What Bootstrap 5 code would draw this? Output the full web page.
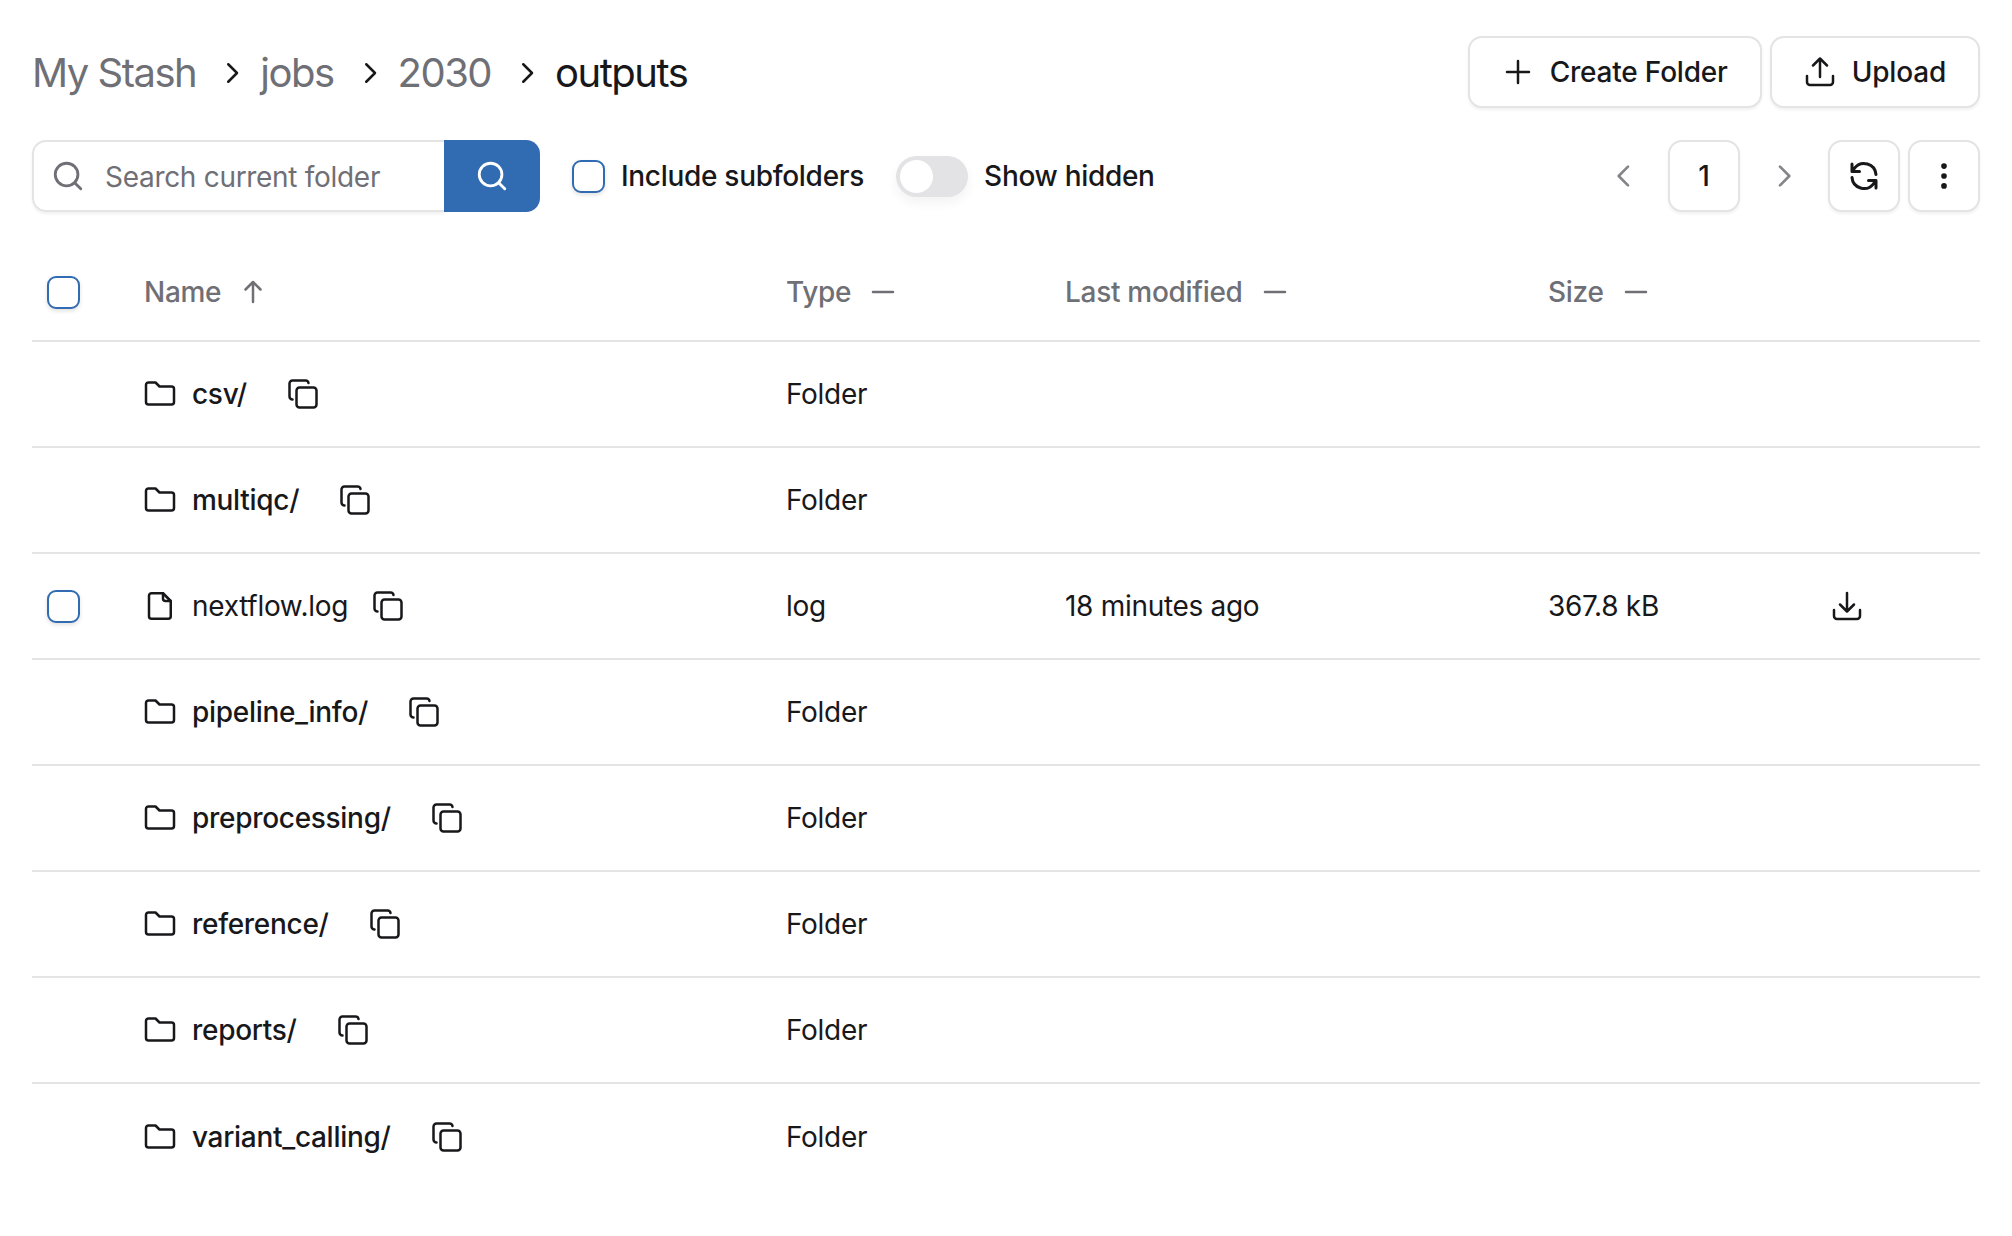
<!DOCTYPE html>
<html lang="en">
<head>
    <meta charset="UTF-8">
    <meta name="viewport" content="width=device-width, initial-scale=1.0">
    <title>My Stash</title>
    <link href="https://cdn.jsdelivr.net/npm/bootstrap@5.3.0/dist/css/bootstrap.min.css" rel="stylesheet">
    <style>
        body { font-family: Inter, "Liberation Sans", sans-serif; font-size: 28px; letter-spacing: -0.3px; color: #18181b; background: #fff; }
        .stash-page { padding: 36px 32px 0; }
        .crumb-row { height: 72px; margin-bottom: 32px; }
        .crumb-trail { padding-top: 2px; }
        .crumb { font-size: 40px; color: #6f6f76; letter-spacing: -1.5px; }
        .crumb-now { color: #18181b; }
        .crumb-sep { width: 64px; padding-left: 8px; color: #18181b; }
        .ui-icon { fill: none; stroke: currentColor; stroke-width: 2.5; stroke-linecap: round; stroke-linejoin: round; flex: none; }
        .thin-icon { stroke-width: 2; }
        .plain-btn { height: 72px; border: 2px solid #e4e4e4; border-radius: 14px; background: #fff; color: #18181b; font-size: 28px; font-weight: 500; letter-spacing: -0.2px; box-shadow: 0 2px 3px rgba(0,0,0,.06); padding: 0 32px; }
        .plain-btn:hover { background: #fff; border-color: #e4e4e4; }
        .square-btn { width: 72px; padding: 0; }
        .search-box { width: 508px; height: 72px; }
        .search-field { flex: 1; border: 2px solid #e4e4e4; border-right: 0; border-radius: 14px 0 0 14px; padding-left: 17px; gap: 20px; color: #6f6f76; box-shadow: 0 2px 3px rgba(0,0,0,.06); }
        .search-field input { border: 0; outline: 0; width: 300px; font-size: 28px; letter-spacing: -0.3px; color: #18181b; padding: 1px 0 0; background: transparent; }
        .search-field input::placeholder { color: #6f6f76; opacity: 1; }
        .search-go { width: 96px; background: #316bb2; color: #fff; border: 0; border-radius: 0 14px 14px 0; padding: 0; }
        .tick-box.form-check-input { width: 33px; height: 33px; margin: 0; border: 2.5px solid #316bb2; border-radius: 9px; box-shadow: 0 2px 4px rgba(0,0,0,.12); flex: none; }
        .include-wrap { margin-left: 32px; gap: 16px; font-weight: 500; }
        .hidden-wrap { margin-left: 32px; gap: 16px; font-weight: 500; }
        .switch-track { width: 72px; height: 41px; border-radius: 21px; background: #e3e3e6; box-shadow: 0 6px 12px rgba(0,0,0,.05); }
        .switch-knob { width: 33px; height: 33px; margin-left: 4px; border-radius: 50%; background: #fff; }
        .pager-arrow { color: #85858a; width: 88px; }
        .pager-num { font-weight: 500; }
        .stash-table { margin: 32px 0 0; table-layout: fixed; width: 100%; --bs-table-color: #18181b; }
        .stash-table th, .stash-table td { padding: 0; vertical-align: middle; border-bottom: 2px solid #e4e4e4; }
        .stash-table th { height: 97px; color: #6f6f76; font-weight: 500; }
        .stash-table td { height: 106px; }
        .stash-table tr:last-child td { border-bottom: 0; }
        .col-tick { width: 112px; }
        .col-name { width: 642px; }
        .col-type { width: 279px; }
        .col-date { width: 483px; }
        .tick-cell { padding-left: 15px !important; }
        .sort-mark { margin-left: 17px; }
        .dash-mark { color: #6f6f76; margin-left: 17px; }
        .name-cell { gap: 16px; font-weight: 500; }
        .file-name { font-weight: 400; }
        .copy-mark { margin-left: 24px; }
        .copy-near { margin-left: 8px; }
        .size-text { width: 283px; }
    </style>
</head>
<body>
    <div class="stash-page">
        <div class="d-flex align-items-center justify-content-between crumb-row">
            <div class="d-flex align-items-center crumb-trail">
                <span class="crumb">My Stash</span>
                <span class="crumb-sep d-flex justify-content-center"><svg class="ui-icon thin-icon" width="30" height="30" viewBox="0 0 24 24"><path d="M9 5l7 7-7 7"/></svg></span>
                <span class="crumb">jobs</span>
                <span class="crumb-sep d-flex justify-content-center"><svg class="ui-icon thin-icon" width="30" height="30" viewBox="0 0 24 24"><path d="M9 5l7 7-7 7"/></svg></span>
                <span class="crumb">2030</span>
                <span class="crumb-sep d-flex justify-content-center"><svg class="ui-icon thin-icon" width="30" height="30" viewBox="0 0 24 24"><path d="M9 5l7 7-7 7"/></svg></span>
                <span class="crumb crumb-now">outputs</span>
            </div>
            <div class="d-flex gap-2">
                <button class="btn plain-btn d-flex align-items-center gap-3">
                    <svg class="ui-icon" width="32" height="32" viewBox="0 0 32 32"><path d="M16 5v22M5 16h22"/></svg>Create Folder
                </button>
                <button class="btn plain-btn d-flex align-items-center gap-3">
                    <svg class="ui-icon" width="32" height="32" viewBox="0 0 32 32"><path d="M3 20v6a3 3 0 0 0 3 3h20a3 3 0 0 0 3-3v-6M16 21V3M9 9.500l7-7 7 7"/></svg>Upload
                </button>
            </div>
        </div>

        <div class="d-flex align-items-center">
            <div class="d-flex search-box">
                <label class="d-flex align-items-center search-field">
                    <svg class="ui-icon thin-icon" width="34" height="34" viewBox="0 0 24 24"><circle cx="11" cy="11" r="8"/><path d="M21 21l-4.3-4.3"/></svg>
                    <input type="text" placeholder="Search current folder">
                </label>
                <button class="search-go d-flex align-items-center justify-content-center">
                    <svg class="ui-icon thin-icon" width="34" height="34" viewBox="0 0 24 24"><circle cx="11" cy="11" r="8"/><path d="M21 21l-4.3-4.3"/></svg>
                </button>
            </div>
            <label class="d-flex align-items-center include-wrap">
                <input class="form-check-input tick-box" type="checkbox">Include subfolders
            </label>
            <div class="d-flex align-items-center hidden-wrap">
                <div class="switch-track d-flex align-items-center"><div class="switch-knob"></div></div>Show hidden
            </div>
            <div class="d-flex align-items-center ms-auto">
                <span class="pager-arrow d-flex justify-content-center"><svg class="ui-icon thin-icon" width="32" height="32" viewBox="0 0 24 24"><path d="M15 5l-7 7 7 7"/></svg></span>
                <button class="btn plain-btn square-btn pager-num">1</button>
                <span class="pager-arrow d-flex justify-content-center"><svg class="ui-icon thin-icon" width="32" height="32" viewBox="0 0 24 24"><path d="M9 5l7 7-7 7"/></svg></span>
                <button class="btn plain-btn square-btn d-flex align-items-center justify-content-center">
                    <svg class="ui-icon thin-icon" width="36" height="36" viewBox="0 0 24 24"><path d="M20 11a8 8 0 0 0-14.300-4.200L4 9V4M4 13a8 8 0 0 0 14.300 4.200L20 15v5M4 9h5M20 15h-5"/></svg>
                </button>
                <button class="btn plain-btn square-btn d-flex align-items-center justify-content-center ms-2">
                    <svg width="34" height="34" viewBox="0 0 24 24" fill="currentColor"><circle cx="12" cy="5" r="2"/><circle cx="12" cy="12" r="2"/><circle cx="12" cy="19" r="2"/></svg>
                </button>
            </div>
        </div>

        <table class="table stash-table">
            <thead>
                <tr>
                    <th class="col-tick tick-cell"><input class="form-check-input tick-box d-block" type="checkbox"></th>
                    <th class="col-name"><div class="d-flex align-items-center">Name<svg class="ui-icon thin-icon sort-mark" width="30" height="30" viewBox="0 0 24 24"><path d="M12 20V4M6 10l6-6 6 6"/></svg></div></th>
                    <th class="col-type"><div class="d-flex align-items-center">Type<svg class="ui-icon thin-icon dash-mark" width="30" height="30" viewBox="0 0 24 24"><path d="M4 12h16"/></svg></div></th>
                    <th class="col-date"><div class="d-flex align-items-center">Last modified<svg class="ui-icon thin-icon dash-mark" width="30" height="30" viewBox="0 0 24 24"><path d="M4 12h16"/></svg></div></th>
                    <th><div class="d-flex align-items-center">Size<svg class="ui-icon thin-icon dash-mark" width="30" height="30" viewBox="0 0 24 24"><path d="M4 12h16"/></svg></div></th>
                </tr>
            </thead>
            <tbody id="file-rows"></tbody>
        </table>
    </div>

    <script src="https://cdn.jsdelivr.net/npm/bootstrap@5.3.0/dist/js/bootstrap.bundle.min.js"></script>
    <script>
        const folderIcon = '<svg class="ui-icon" width="32" height="32" viewBox="0 0 32 32"><path d="M4.500 4.500h7l4 4h12a2.500 2.500 0 0 1 2.500 2.500v13a2.500 2.500 0 0 1-2.500 2.500h-23A2.500 2.500 0 0 1 2 24V7a2.500 2.500 0 0 1 2.500-2.500z"/></svg>';
        const fileIcon = '<svg class="ui-icon" width="32" height="32" viewBox="0 0 32 32"><path d="M7.500 3.250H19l7.750 7.750v15.250a2.500 2.500 0 0 1-2.500 2.500H7.500a2.500 2.500 0 0 1-2.500-2.500V5.750a2.500 2.500 0 0 1 2.500-2.500z"/><path d="M19 3.250V8.500a2.500 2.500 0 0 0 2.500 2.500h5.250"/></svg>';
        const copyIcon = near => `<svg class="ui-icon ${near ? 'copy-near' : 'copy-mark'}" width="32" height="32" viewBox="0 0 32 32"><rect x="9.500" y="9.500" width="20" height="20" rx="3"/><path d="M5.500 21.500a3 3 0 0 1-3-3V5.500a3 3 0 0 1 3-3h13a3 3 0 0 1 3 2.500"/></svg>`;
        const downloadIcon = '<svg class="ui-icon" width="32" height="32" viewBox="0 0 32 32"><path d="M3 20v6a3 3 0 0 0 3 3h20a3 3 0 0 0 3-3v-6M16 3v18M9 14.500l7 7 7-7"/></svg>';

        const rows = ['csv/', 'multiqc/', 'nextflow.log', 'pipeline_info/', 'preprocessing/', 'reference/', 'reports/', 'variant_calling/'];
        const body = document.getElementById('file-rows');

        rows.forEach(name => {
            const isFolder = name.endsWith('/');
            const tr = document.createElement('tr');
            tr.innerHTML = `
                <td class="tick-cell">${isFolder ? '' : '<input class="form-check-input tick-box d-block" type="checkbox">'}</td>
                <td><div class="d-flex align-items-center name-cell">${isFolder ? folderIcon : fileIcon}<span class="${isFolder ? '' : 'file-name'}">${name}</span>${copyIcon(!isFolder)}</div></td>
                <td>${isFolder ? 'Folder' : 'log'}</td>
                <td>${isFolder ? '' : '18 minutes ago'}</td>
                <td>${isFolder ? '' : `<div class="d-flex align-items-center"><span class="size-text">367.8 kB</span>${downloadIcon}</div>`}</td>`;
            body.appendChild(tr);
        });
    </script>
</body>
</html>
